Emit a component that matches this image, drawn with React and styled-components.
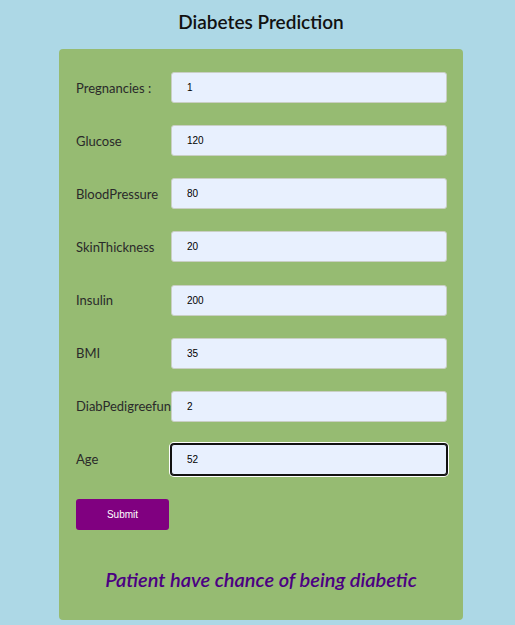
import React from "react";
import styled, { createGlobalStyle } from "styled-components";

const Global = createGlobalStyle`
  html, body { margin: 0; padding: 0; background: #add8e6; }
  body { font-family: Lato, "Noto Sans", sans-serif; }
`;

const Page = styled.div`
  width: 404px;
  margin-left: 59px;
  display: flex;
  flex-direction: column;
  align-items: stretch;
`;

const Title = styled.h1`
  margin: 0;
  height: 49px;
  display: flex;
  align-items: center;
  justify-content: center;
  padding-bottom: 6px;
  box-sizing: border-box;
  font-size: 19px;
  font-weight: 600;
  color: #111;
`;

const Card = styled.form`
  background: #96bb72;
  border-radius: 4px;
  padding: 23px 16px 0 17px;
  height: 571px;
  box-sizing: border-box;
  display: flex;
  flex-direction: column;
  gap: 22.15px;
`;

const Row = styled.div`
  display: flex;
  align-items: center;
`;

const Label = styled.label`
  width: 95px;
  flex: none;
  font-size: 13px;
  color: #2a2a2a;
  white-space: nowrap;
`;

const Input = styled.input`
  flex: 1;
  height: 31px;
  box-sizing: border-box;
  background: #e8f0fe;
  border: 1px solid ${(p) => (p.$focused ? "#111" : "#c9cfc4")};
  box-shadow: ${(p) => (p.$focused ? "0 0 0 1px #111, 0 0 0 2px #fff" : "none")};
  border-radius: 3px;
  padding: 0 0 0 15px;
  font-family: "Liberation Sans", Arial, sans-serif;
  font-size: 10px;
  color: #000;
  outline: none;
`;

const Button = styled.button`
  width: 93px;
  height: 31px;
  margin-top: 2px;
  background: #800080;
  color: #fff;
  border: none;
  border-radius: 3px;
  font-family: "Liberation Sans", Arial, sans-serif;
  font-size: 10px;
  font-weight: 400;
  cursor: pointer;
`;

const Result = styled.p`
  margin: 15px 0 0 -1px;
  text-align: center;
  font-style: italic;
  font-weight: 600;
  font-size: 20px;
  color: #4b0082;
`;

const fields = [
  ["Pregnancies :", "1"],
  ["Glucose", "120"],
  ["BloodPressure", "80"],
  ["SkinThickness", "20"],
  ["Insulin", "200"],
  ["BMI", "35"],
  ["DiabPedigreefun", "2"],
  ["Age", "52"],
];

export default function App() {
  return (
    <>
      <Global />
      <Page>
        <Title>Diabetes Prediction</Title>
        <Card onSubmit={(e) => e.preventDefault()}>
          {fields.map(([label, value], i) => (
            <Row key={label}>
              <Label>{label}</Label>
              <Input defaultValue={value} $focused={i === fields.length - 1} />
            </Row>
          ))}
          <div>
            <Button type="submit">Submit</Button>
          </div>
          <Result>Patient have chance of being diabetic</Result>
        </Card>
      </Page>
    </>
  );
}
